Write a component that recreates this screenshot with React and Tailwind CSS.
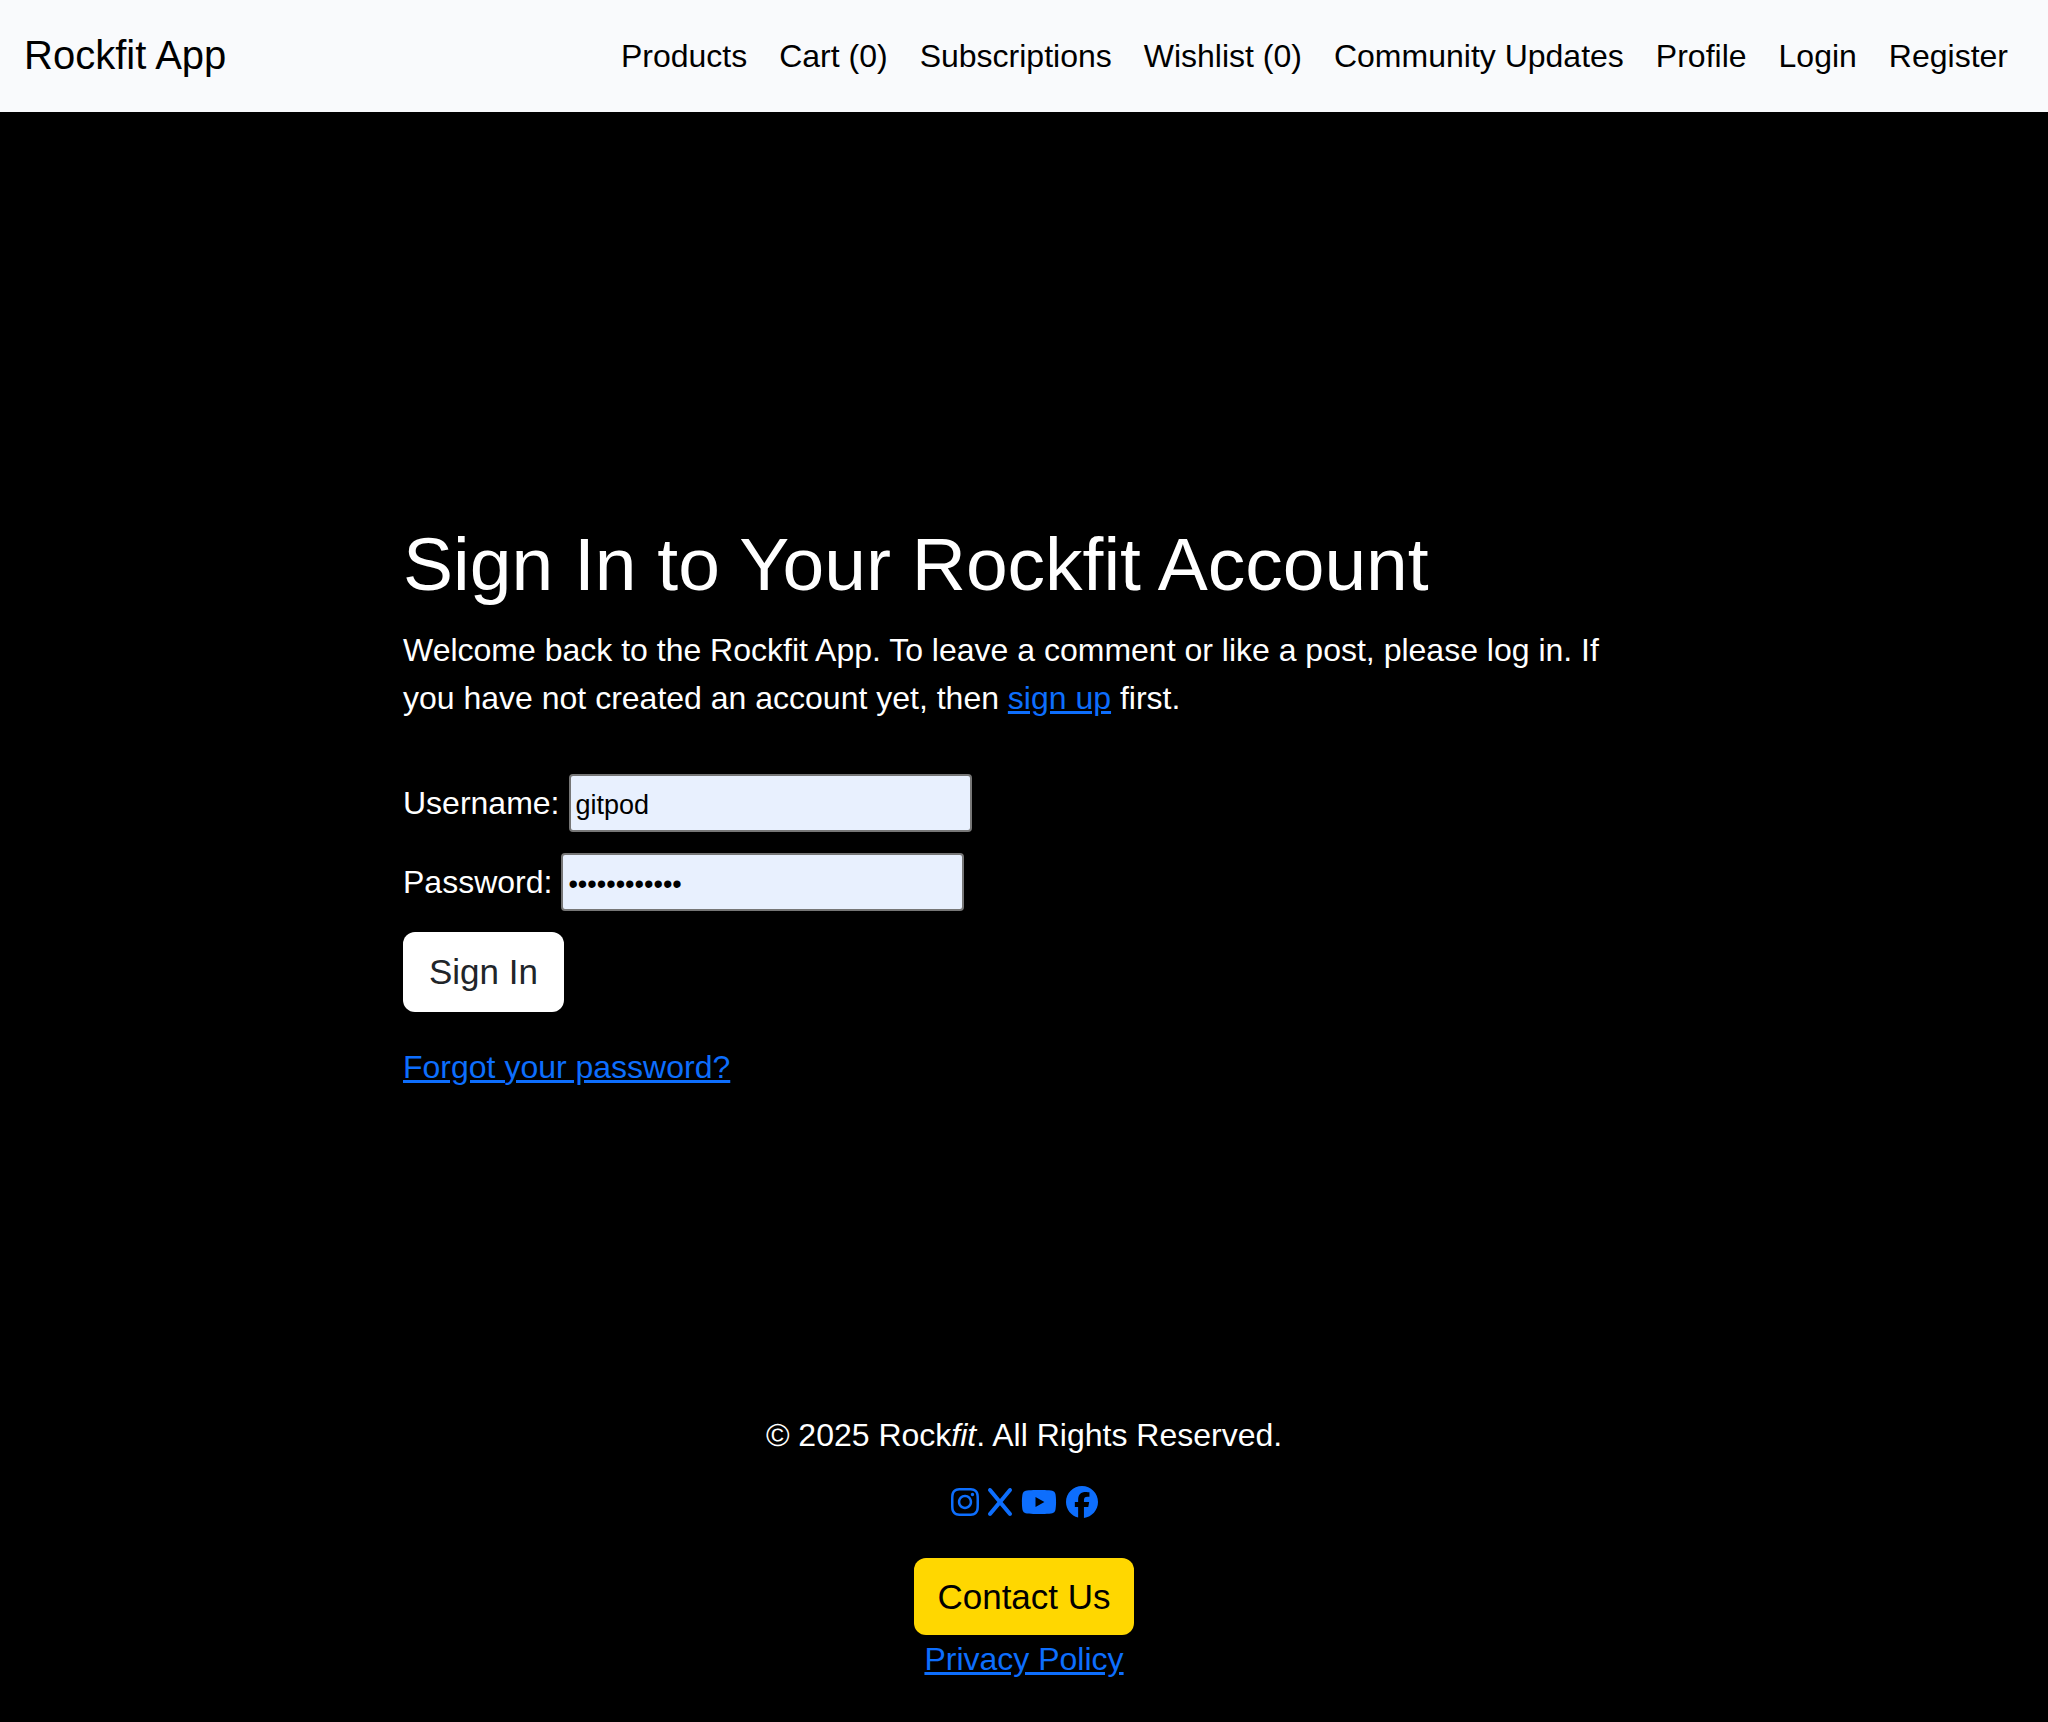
import { useState } from "react";
import { FaInstagram, FaX, FaYoutube, FaFacebook } from "react-icons/fa6";

const links = [
  "Products",
  "Cart (0)",
  "Subscriptions",
  "Wishlist (0)",
  "Community Updates",
  "Profile",
  "Login",
  "Register",
];

const socials = [
  { name: "Instagram", Icon: FaInstagram, size: "w-7" },
  { name: "X", Icon: FaX, size: "w-6" },
  { name: "YouTube", Icon: FaYoutube, size: "w-9" },
  { name: "Facebook", Icon: FaFacebook, size: "w-8" },
];

function Navbar() {
  return (
    <header className="bg-[#f9fafc] px-6 py-4 text-black">
      <nav className="flex items-center justify-between">
        <a href="#home" className="pb-0.5 text-[40px] leading-[58px]">
          Rockfit App
        </a>
        <ul className="flex flex-wrap">
          {links.map((label) => (
            <li key={label}>
              <a href="#nav" className="block p-4">
                {label}
              </a>
            </li>
          ))}
        </ul>
      </nav>
    </header>
  );
}

function Field({ id, label, type, initial }) {
  const [value, setValue] = useState(initial);
  return (
    <div className="flex items-center gap-[9px]">
      <label htmlFor={id}>{label}</label>
      <input
        id={id}
        type={type}
        value={value}
        onChange={(e) => setValue(e.target.value)}
        className="h-[58px] w-[403px] rounded border-2 border-[#767676] bg-[#e8f0fe] px-[5px] pt-1.5 text-[27px] text-black"
      />
    </div>
  );
}

function SignIn() {
  return (
    <main className="flex flex-1 flex-col items-center justify-center pt-[86px]">
      <div className="w-full max-w-[1242px]">
        <h1 className="mb-[17px] text-[75px] leading-[90px]">Sign In to Your Rockfit Account</h1>
        <p>
          Welcome back to the Rockfit App. To leave a comment or like a post, please log in. If you
          have not created an account yet, then{" "}
          <a href="#signup" className="text-[#0d6efd] underline">
            sign up
          </a>{" "}
          first.
        </p>
        <form
          className="mt-[52px] flex flex-col items-start gap-[21px]"
          onSubmit={(e) => e.preventDefault()}
        >
          <Field id="username" label="Username:" type="text" initial="gitpod" />
          <Field id="password" label="Password:" type="password" initial="gitpodgitpod" />
          <button
            type="submit"
            className="rounded-xl bg-white px-[26px] py-4 text-[35px] leading-[48px] text-[#212529]"
          >
            Sign In
          </button>
        </form>
        <a href="#reset" className="mt-[31px] inline-block text-[#0d6efd] underline">
          Forgot your password?
        </a>
      </div>
    </main>
  );
}

function Footer() {
  return (
    <footer className="flex flex-col items-center pb-[39px]">
      <p>
        © 2025 Rock<em>fit</em>. All Rights Reserved.
      </p>
      <ul className="mt-[27px] flex items-center gap-[9px] text-[#0d6efd]">
        {socials.map(({ name, Icon, size }) => (
          <li key={name}>
            <a href="#social" aria-label={name} className="block">
              <Icon className={`h-8 ${size}`} />
            </a>
          </li>
        ))}
      </ul>
      <button
        type="button"
        className="mt-10 rounded-xl bg-[#ffd700] px-[23px] py-3.5 text-[35px] leading-[49px] text-black"
      >
        Contact Us
      </button>
      <a href="#privacy" className="text-[#0d6efd] underline">
        Privacy Policy
      </a>
    </footer>
  );
}

export default function App() {
  return (
    <div className="flex min-h-screen flex-col bg-black font-['Liberation_Sans',Arial,sans-serif] text-[32px] leading-[48px] text-white">
      <Navbar />
      <SignIn />
      <Footer />
    </div>
  );
}
